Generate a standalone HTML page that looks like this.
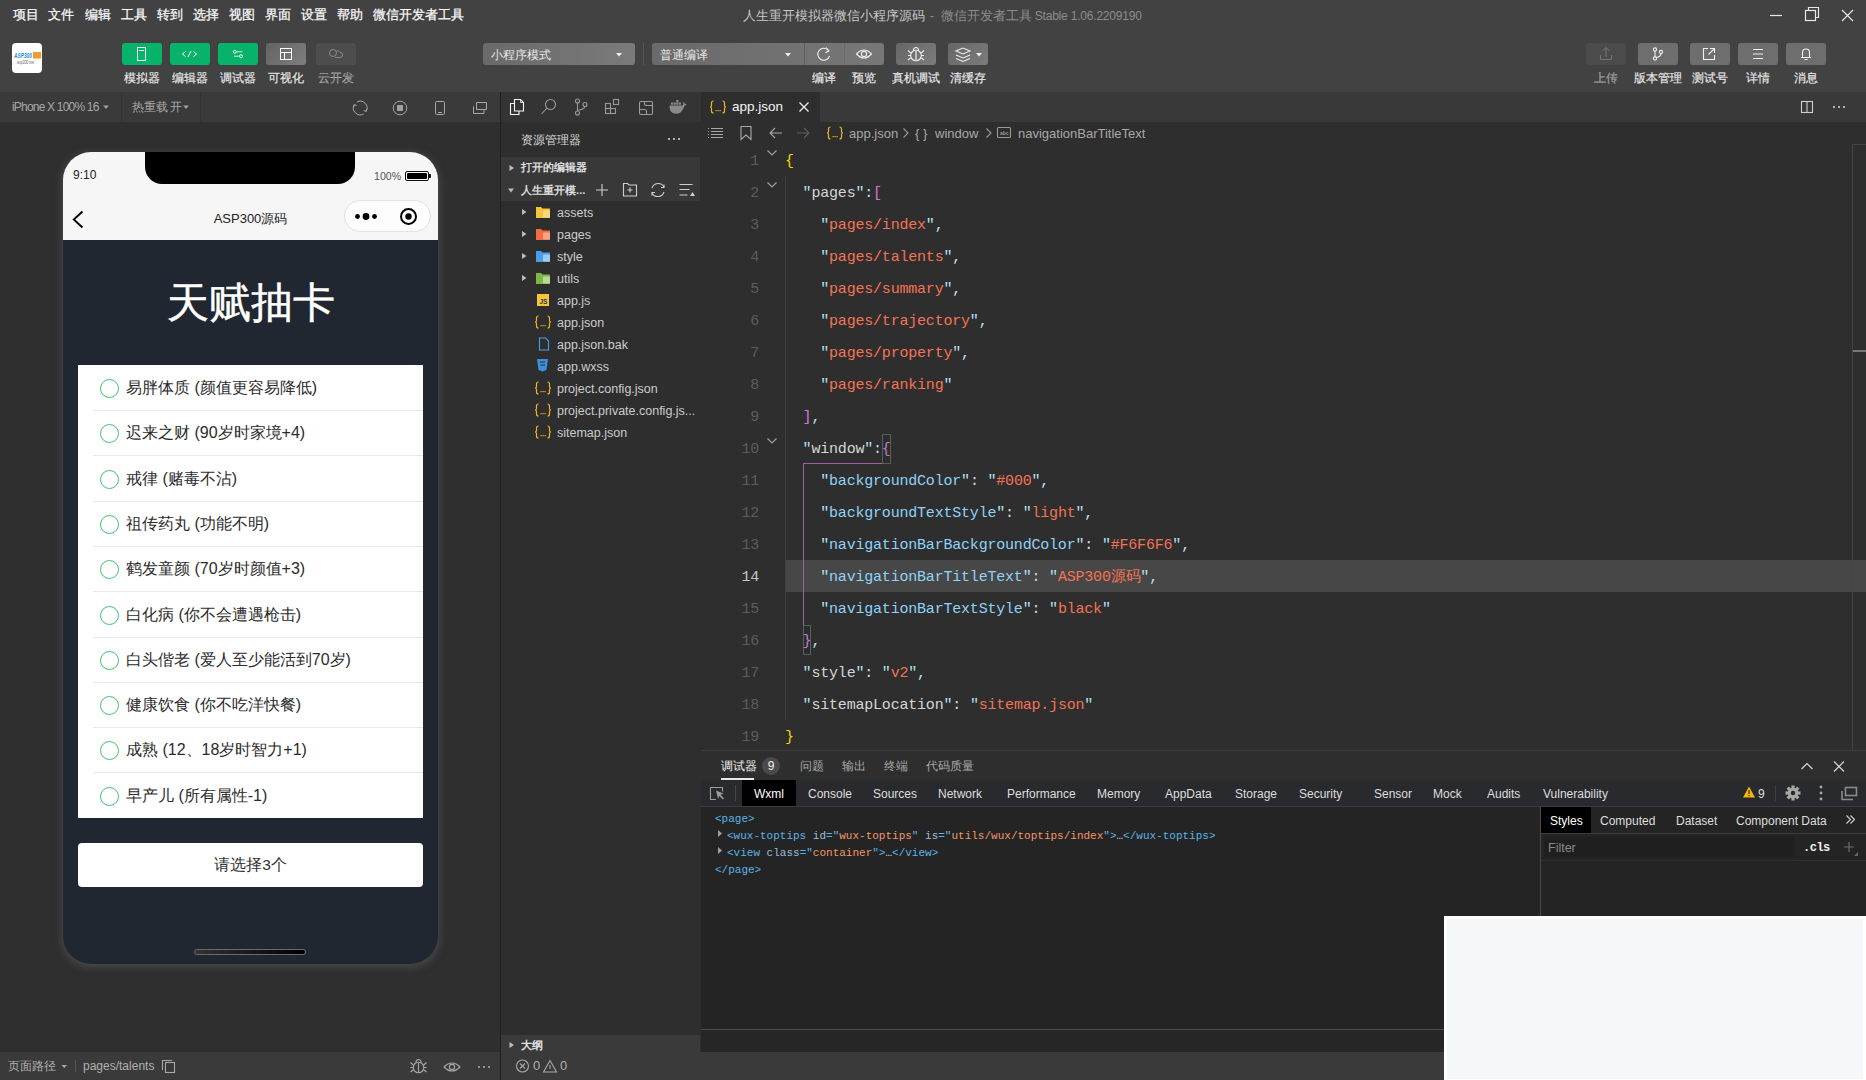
<!DOCTYPE html>
<html><head><meta charset="utf-8">
<style>
*{box-sizing:border-box;margin:0;padding:0}
html,body{width:1866px;height:1080px;overflow:hidden;background:#424242;font-family:"Liberation Sans",sans-serif;color:#ddd}
.a{position:absolute;white-space:nowrap}
.r{position:absolute}
svg{position:absolute;overflow:visible}
.menu{top:7px;font-size:13.4px;color:#fafafa;line-height:16px;-webkit-text-stroke:0.25px #fafafa}
.tbtn{position:absolute;top:43px;width:40px;height:22px;border-radius:3px;background:#07b26a}
.tlab{position:absolute;top:70px;font-size:12px;line-height:16px;color:#ececec;-webkit-text-stroke:0.2px #ddd;text-align:center;width:60px}
.gbtn{position:absolute;top:43px;height:22px;border-radius:3px;background:#6e6e6e}
</style></head><body>
<!-- ===== MENU BAR ===== -->
<div class="a menu" style="left:13px">项目</div>
<div class="a menu" style="left:48px">文件</div>
<div class="a menu" style="left:85px">编辑</div>
<div class="a menu" style="left:121px">工具</div>
<div class="a menu" style="left:157px">转到</div>
<div class="a menu" style="left:193px">选择</div>
<div class="a menu" style="left:229px">视图</div>
<div class="a menu" style="left:265px">界面</div>
<div class="a menu" style="left:301px">设置</div>
<div class="a menu" style="left:337px">帮助</div>
<div class="a menu" style="left:373px">微信开发者工具</div>
<div class="a" style="left:743px;top:8px;font-size:13px;line-height:15px;color:#c8c8c8">人生重开模拟器微信小程序源码 <span style="color:#8c8c8c;padding-left:1px">-<span style="display:inline-block;width:3px"></span> 微信开发者工具<span style="font-size:12px;letter-spacing:-0.2px"> Stable 1.06.2209190</span></span></div>


<!-- ===== TOOLBAR ===== -->
<div class="r" style="left:12px;top:43px;width:30px;height:30px;background:#fff;border-radius:4px"></div>
<svg style="left:12px;top:43px" width="30" height="30">
 <text x="2" y="15" font-size="7.5" font-family="Liberation Sans" font-weight="bold" font-style="italic" fill="#2b8fd6" textLength="18" lengthAdjust="spacingAndGlyphs">ASP300</text>
 <rect x="21" y="9" width="8" height="6.5" fill="#f39a2c"/>
 <text x="5" y="20.5" font-size="4.5" font-family="Liberation Sans" font-style="italic" fill="#666" textLength="17" lengthAdjust="spacingAndGlyphs">asp300.net</text>
</svg>
<div class="tbtn" style="left:122px"></div>
<div class="tbtn" style="left:170px"></div>
<div class="tbtn" style="left:218px"></div>
<div class="gbtn" style="left:266px;width:40px;background:linear-gradient(135deg,#636363,#7e7e7e)"></div>
<div class="gbtn" style="left:316px;width:40px;background:#4d4d4d"></div>
<svg style="left:0;top:0" width="1866" height="92">
 <g fill="none" stroke="#fff" stroke-width="1">
  <rect x="137.5" y="47.5" width="8" height="13"/><line x1="139" y1="50.5" x2="144" y2="50.5"/>
  <path d="M185.5 51.5 L182.5 54 L185.5 56.5 M188 57 L191 51 M193.5 51.5 L196.5 54 L193.5 56.5"/>
  <path d="M236.5 51.8 H242.5 M234 56.2 H239.5" stroke="#c8efd9"/>
  <circle cx="234.8" cy="51.8" r="1.5"/><circle cx="241" cy="56.2" r="1.5"/>
  <rect x="280.5" y="48.5" width="11" height="11"/><path d="M280.5 52.5 H291.5 M284.5 52.5 V59.5"/>
 </g>
 <g fill="none" stroke="#8a8a8a" stroke-width="1">
  <circle cx="333" cy="53" r="3.5"/><path d="M335 57.5 h5 a2.6 2.6 0 0 0 0 -5.2 a3 3 0 0 0 -3.5 -1.5"/>
 </g>
</svg>
<div class="tlab" style="left:112px">模拟器</div>
<div class="tlab" style="left:160px">编辑器</div>
<div class="tlab" style="left:208px">调试器</div>
<div class="tlab" style="left:256px">可视化</div>
<div class="tlab" style="left:306px;color:#7c7c7c">云开发</div>

<div class="gbtn" style="left:483px;width:152px;background:linear-gradient(90deg,#6a6a6a,#7a7a7a)"></div>
<div class="a" style="left:491px;top:48px;font-size:12.2px;line-height:15px;color:#e8e8e8">小程序模式</div>
<div class="r" style="left:643px;top:43px;width:1px;height:22px;background:#555"></div>
<div class="gbtn" style="left:652px;width:232px;background:linear-gradient(90deg,#6a6a6a,#777)"></div>
<div class="r" style="left:804px;top:43px;width:1px;height:22px;background:#606060"></div>
<div class="r" style="left:844px;top:43px;width:1px;height:22px;background:#6a6a6a"></div>
<div class="a" style="left:660px;top:48px;font-size:12.2px;line-height:15px;color:#e8e8e8">普通编译</div>
<div class="gbtn" style="left:896px;width:40px;background:linear-gradient(135deg,#666,#7c7c7c)"></div>
<div class="gbtn" style="left:948px;width:40px;background:linear-gradient(135deg,#666,#7c7c7c)"></div>
<svg style="left:0;top:0" width="1866" height="92">
 <g fill="#f0f0f0"><path d="M616 53 h6 l-3 3.5z"/><path d="M785 53 h6 l-3 3.5z"/><path d="M976 53 h6 l-3 3.5z"/></g>
 <g fill="none" stroke="#eee" stroke-width="1.1">
  <path d="M828.5 50.5 A6 6 0 1 0 829.5 56"/><path d="M826 47.5 L829 50.8 L825.5 52.8"/>
  <path d="M856.5 54 Q864 46 871.5 54 Q864 62 856.5 54Z"/><circle cx="864" cy="54" r="2.6"/>
  <circle cx="916" cy="55.5" r="5.3"/><path d="M913.3 50.8 Q913.5 47.5 916 47.5 Q918.5 47.5 918.7 50.8"/><path d="M916 50.5 V60.5" stroke-width="1.6" stroke="#d0d0d0"/><path d="M908 50.5 l2.8 2.5 M924 50.5 l-2.8 2.5 M908 55.5 h2.7 M924 55.5 h-2.7 M908 60 l2.8 -2.3 M924 60 l-2.8 -2.3"/>
  <path d="M956 51 L963 48 L970 51 L963 54 Z M956 55 L963 58 L970 55 M956 58.5 L963 61.5 L970 58.5"/>
 </g>
</svg>
<div class="tlab" style="left:794px">编译</div>
<div class="tlab" style="left:834px">预览</div>
<div class="tlab" style="left:886px">真机调试</div>
<div class="tlab" style="left:938px">清缓存</div>

<div class="gbtn" style="left:1586px;width:40px;background:#4b4b4b"></div>
<div class="gbtn" style="left:1638px;width:40px;background:#6e6e6e"></div>
<div class="gbtn" style="left:1690px;width:40px;background:#6e6e6e"></div>
<div class="gbtn" style="left:1738px;width:40px;background:#6e6e6e"></div>
<div class="gbtn" style="left:1786px;width:40px;background:#6e6e6e"></div>
<svg style="left:0;top:0" width="1866" height="92">
 <g fill="none" stroke="#777" stroke-width="1"><path d="M1600.5 55 v4.5 h11 v-4.5 M1606 57 V48 M1602.5 51 L1606 47.5 L1609.5 51"/></g>
 <g fill="none" stroke="#f0f0f0" stroke-width="1.1">
  <circle cx="1655" cy="49.5" r="1.6"/><circle cx="1655" cy="58.5" r="1.6"/><circle cx="1661" cy="52" r="1.6"/><path d="M1655 51 V57 M1661 53.6 Q1661 57 1656 57.5"/>
  <path d="M1708 48.5 h-4.5 v11 h11 v-4.5 M1710 48.5 h4.5 v4.5 M1714.5 48.5 L1708.5 54.5"/>
  <path d="M1753 49.5 h10 M1753 54 h10 M1753 58.5 h10"/>
  <path d="M1801 57.5 h10 M1802.5 57.5 V52.5 a3.5 3.5 0 0 1 7 0 V57.5 M1804.5 59.5 h3"/>
 </g>
 <g fill="none" stroke="#e8e8e8" stroke-width="1.2">
  <path d="M1770 15.5 h12"/><rect x="1805.5" y="10.5" width="10" height="10"/><path d="M1808.5 10.5 V7.5 H1818.5 V17.5 H1815.5"/>
  <path d="M1842 10 L1853 21 M1853 10 L1842 21"/>
 </g>
</svg>
<div class="tlab" style="left:1576px;color:#7a7a7a">上传</div>
<div class="tlab" style="left:1628px">版本管理</div>
<div class="tlab" style="left:1680px">测试号</div>
<div class="tlab" style="left:1728px">详情</div>
<div class="tlab" style="left:1776px">消息</div>

<!-- SIM -->
<div class="r" id="sim" style="left:0;top:92px;width:500px;height:960px;background:#2f2f2f"></div>
<div class="r" style="left:0;top:92px;width:500px;height:30px;background:#3a3a3a"></div>

<!-- EXPLORER -->
<div class="r" style="left:501px;top:92px;width:200px;height:960px;background:#2e2e2e"></div>
<div class="r" style="left:501px;top:92px;width:200px;height:30px;background:#343434"></div>
<!-- EDITOR -->
<div class="r" style="left:701px;top:92px;width:1165px;height:30px;background:#393939"></div>
<div class="r" style="left:701px;top:92px;width:119px;height:30px;background:#2e2e2e"></div>
<div class="r" style="left:701px;top:122px;width:1165px;height:628px;background:#2e2e2e"></div>
<!-- DEVTOOLS -->
<div class="r" style="left:701px;top:750px;width:1165px;height:1px;background:#3c3c3c"></div>
<div class="r" style="left:701px;top:751px;width:1165px;height:29px;background:#2e2e2e"></div>
<div class="r" style="left:701px;top:780px;width:1165px;height:26px;background:#292a2d"></div>
<div class="r" style="left:701px;top:806px;width:1165px;height:1px;background:#3c3c3c"></div>
<div class="r" style="left:701px;top:807px;width:1165px;height:245px;background:#242424"></div>

<!-- SIM TOOLBAR -->
<div class="a" style="left:12px;top:100px;font-size:12px;line-height:14px;color:#a8a8a8;letter-spacing:-0.8px">iPhone X 100% 16</div>
<div class="r" style="left:121px;top:92px;width:1px;height:30px;background:#333"></div>
<div class="a" style="left:132px;top:100px;font-size:11.6px;line-height:14px;color:#a8a8a8;letter-spacing:-0.2px">热重载 开</div>
<div class="r" style="left:200px;top:92px;width:1px;height:30px;background:#333"></div>
<svg style="left:0;top:0" width="500" height="122">
 <g fill="#a0a0a0"><path d="M103 105.5 h6 l-3 3.5z"/><path d="M183 105.5 h6 l-3 3.5z"/></g>
 <g fill="none" stroke="#a8a8a8" stroke-width="1">
  <path d="M356.8 102.1 A6.8 6.8 0 0 1 366.1 111.4"/><path d="M363.6 113.9 A6.8 6.8 0 0 1 354.3 104.6"/>
  <path d="M363.8 110.5 l2.3 1 l0.6 -2.5"/><path d="M356.6 105.5 l-2.3 -1 l-0.6 2.5"/>
  <circle cx="400" cy="108" r="6.8"/>
  <rect x="435.5" y="101.5" width="9" height="13" rx="1"/><path d="M438 112.5 h4"/>
  <path d="M476.5 102.5 h10 v7 h-10z M473.5 106.5 v7 h10.5 v-3.5"/>
 </g>
 <rect x="397" y="105" width="6" height="6" fill="#a0a0a0"/>
</svg>
<!-- PHONE -->
<div class="r" style="left:63px;top:152px;width:375px;height:812px;border-radius:28px;background:#212730;box-shadow:0 2px 8px 1px rgba(78,78,78,.9);overflow:hidden">
 <div class="r" style="left:0;top:0;width:375px;height:88px;background:#f6f6f6"></div>
 <div class="r" style="left:82px;top:0;width:210px;height:32px;background:#000;border-radius:0 0 17px 17px"></div>
 <div class="a" style="left:10px;top:16px;font-size:12px;line-height:14px;color:#222">9:10</div>
 <div class="a" style="left:311px;top:17px;font-size:10.6px;line-height:14px;color:#555">100%</div>
 <div class="r" style="left:342px;top:19px;width:24px;height:10px;border:1px solid #111;border-radius:2px;padding:1px"><div style="width:100%;height:100%;background:#000;border-radius:1px"></div></div>
 <div class="r" style="left:366px;top:22px;width:2px;height:4px;background:#111;border-radius:0 1px 1px 0"></div>
 <svg style="left:0;top:0" width="375" height="88">
  <path d="M19.5 59.5 L10.8 67.5 L19.5 75.5" fill="none" stroke="#000" stroke-width="1.9"/>
 </svg>
 <div class="a" style="left:0;top:59px;width:375px;text-align:center;font-size:13px;line-height:16px;color:#222">ASP300源码</div>
 <div class="r" style="left:281px;top:48px;width:87px;height:32px;border-radius:16px;background:#fdfdfd;border:1px solid #e2e2e2"></div>
 
 <svg style="left:0;top:0" width="375" height="88">
  <circle cx="294.5" cy="64.5" r="2.4"/><circle cx="303" cy="64.5" r="3.4"/><circle cx="311.5" cy="64.5" r="2.4"/>
  <circle cx="345.5" cy="64.5" r="7.5" fill="none" stroke="#000" stroke-width="2"/><circle cx="345.5" cy="64.5" r="3.2"/>
 </svg>
 <div class="a" style="left:0;top:125.5px;width:375px;text-align:center;font-size:41.5px;line-height:50px;color:#fff;-webkit-text-stroke:0.5px #fff">天赋抽卡</div>
 <div class="r" style="left:15px;top:213px;width:345px;height:453px;background:#fff"></div>
 <div class="r" style="left:15px;top:691px;width:345px;height:44px;background:#fff;border-radius:4px"></div>
 <div class="a" style="left:15px;top:703px;width:345px;text-align:center;font-size:15.5px;line-height:20px;color:#333">请选择3个</div>
 <div class="r" style="left:131px;top:797px;width:112px;height:6px;border-radius:3px;background:linear-gradient(90deg,#333,#000);border:1px solid #6a6a6a"></div>
</div>
<div class="r" style="left:100px;top:379.0px;width:19px;height:19px;border:1px solid #3fc46e;border-radius:50%"></div>
<div class="a" style="left:126px;top:378.0px;font-size:16px;line-height:20px;color:#2b2b2b">易胖体质 (颜值更容易降低)</div>
<div class="r" style="left:93px;top:410.0px;width:330px;height:1px;background:#e8e8e8"></div>
<div class="r" style="left:100px;top:424.3px;width:19px;height:19px;border:1px solid #3fc46e;border-radius:50%"></div>
<div class="a" style="left:126px;top:423.3px;font-size:16px;line-height:20px;color:#2b2b2b">迟来之财 (90岁时家境+4)</div>
<div class="r" style="left:93px;top:455.3px;width:330px;height:1px;background:#e8e8e8"></div>
<div class="r" style="left:100px;top:469.6px;width:19px;height:19px;border:1px solid #3fc46e;border-radius:50%"></div>
<div class="a" style="left:126px;top:468.6px;font-size:16px;line-height:20px;color:#2b2b2b">戒律 (赌毒不沾)</div>
<div class="r" style="left:93px;top:500.6px;width:330px;height:1px;background:#e8e8e8"></div>
<div class="r" style="left:100px;top:514.9px;width:19px;height:19px;border:1px solid #3fc46e;border-radius:50%"></div>
<div class="a" style="left:126px;top:513.9px;font-size:16px;line-height:20px;color:#2b2b2b">祖传药丸 (功能不明)</div>
<div class="r" style="left:93px;top:545.9px;width:330px;height:1px;background:#e8e8e8"></div>
<div class="r" style="left:100px;top:560.2px;width:19px;height:19px;border:1px solid #3fc46e;border-radius:50%"></div>
<div class="a" style="left:126px;top:559.2px;font-size:16px;line-height:20px;color:#2b2b2b">鹤发童颜 (70岁时颜值+3)</div>
<div class="r" style="left:93px;top:591.2px;width:330px;height:1px;background:#e8e8e8"></div>
<div class="r" style="left:100px;top:605.5px;width:19px;height:19px;border:1px solid #3fc46e;border-radius:50%"></div>
<div class="a" style="left:126px;top:604.5px;font-size:16px;line-height:20px;color:#2b2b2b">白化病 (你不会遭遇枪击)</div>
<div class="r" style="left:93px;top:636.5px;width:330px;height:1px;background:#e8e8e8"></div>
<div class="r" style="left:100px;top:650.8px;width:19px;height:19px;border:1px solid #3fc46e;border-radius:50%"></div>
<div class="a" style="left:126px;top:649.8px;font-size:16px;line-height:20px;color:#2b2b2b">白头偕老 (爱人至少能活到70岁)</div>
<div class="r" style="left:93px;top:681.8px;width:330px;height:1px;background:#e8e8e8"></div>
<div class="r" style="left:100px;top:696.1px;width:19px;height:19px;border:1px solid #3fc46e;border-radius:50%"></div>
<div class="a" style="left:126px;top:695.1px;font-size:16px;line-height:20px;color:#2b2b2b">健康饮食 (你不吃洋快餐)</div>
<div class="r" style="left:93px;top:727.1px;width:330px;height:1px;background:#e8e8e8"></div>
<div class="r" style="left:100px;top:741.4px;width:19px;height:19px;border:1px solid #3fc46e;border-radius:50%"></div>
<div class="a" style="left:126px;top:740.4px;font-size:16px;line-height:20px;color:#2b2b2b">成熟 (12、18岁时智力+1)</div>
<div class="r" style="left:93px;top:772.4px;width:330px;height:1px;background:#e8e8e8"></div>
<div class="r" style="left:100px;top:786.7px;width:19px;height:19px;border:1px solid #3fc46e;border-radius:50%"></div>
<div class="a" style="left:126px;top:785.7px;font-size:16px;line-height:20px;color:#2b2b2b">早产儿 (所有属性-1)</div>


<!-- EXPLORER CONTENT -->
<svg style="left:0;top:0" width="701" height="450">
 <g fill="none" stroke="#f4f4f4" stroke-width="1.1">
  <path d="M514.5 99.5 h6 l3 3 v8.5 h-9z"/><path d="M514.5 103.5 h-4 v11 h8.5 v-3.5"/><path d="M520.5 99.5 v3 h3" stroke-width="0.8"/>
 </g>
 <g fill="none" stroke="#9a9a9a" stroke-width="1.1">
  <circle cx="550.5" cy="104.5" r="5"/><path d="M547 108 L541.5 114"/>
  <circle cx="577.5" cy="101" r="2"/><circle cx="577.5" cy="113" r="2"/><circle cx="585" cy="104.5" r="2"/><path d="M577.5 103 V111 M585 106.5 Q585 109 578.5 110"/>
  <rect x="605.5" y="103.5" width="5" height="5"/><rect x="605.5" y="108.5" width="5" height="5"/><rect x="610.5" y="108.5" width="5" height="5"/><rect x="613.5" y="99.5" width="5" height="5"/>
  <rect x="639.5" y="101.5" width="13" height="13" rx="1.5"/><path d="M644.5 101.5 v2 q0 2 2 2 h6 M639.5 109.5 h5 q2 0 2 2 v3"/>
 </g>
 <path fill="#8a8a8a" d="M669.5 105.5 h13 l1 -1.5 l-0.8 -2 l1.5 0.5 l0.8 1.5 h1.5 q-0.5 1.5 -2 1.8 q-2.5 8 -8 8 q-7 0 -7 -7.5z"/><g fill="#8a8a8a"><rect x="671" y="102.5" width="2.2" height="2.2"/><rect x="673.6" y="102.5" width="2.2" height="2.2"/><rect x="676.2" y="102.5" width="2.2" height="2.2"/><rect x="676.2" y="100" width="2.2" height="2.2"/><rect x="678.8" y="102.5" width="2.2" height="2.2"/></g>
 <g fill="#d0d0d0"><circle cx="669" cy="139" r="1.1"/><circle cx="674" cy="139" r="1.1"/><circle cx="679" cy="139" r="1.1"/></g>
</svg>
<div class="a" style="left:521px;top:132px;font-size:11.5px;line-height:16px;color:#d8d8d8">资源管理器</div>
<div class="r" style="left:501px;top:157px;width:199px;height:44px;background:#383838"></div>
<div class="a" style="left:521px;top:159px;font-size:11.3px;line-height:16px;color:#dcdcdc;font-weight:bold">打开的编辑器</div>
<div class="a" style="left:521px;top:182px;font-size:11.3px;line-height:16px;color:#dcdcdc;font-weight:bold">人生重开模...</div>
<svg style="left:0;top:0" width="701" height="450">
 <g fill="#bbb"><path d="M509.5 165 l4.5 3 l-4.5 3z"/><path d="M508 188.5 h6 l-3 4z"/>
  <path d="M522 209 l4.5 3 l-4.5 3z"/><path d="M522 231 l4.5 3 l-4.5 3z"/><path d="M522 253 l4.5 3 l-4.5 3z"/><path d="M522 275 l4.5 3 l-4.5 3z"/>
 </g>
 <g fill="none" stroke="#cfcfcf" stroke-width="1.1">
  <path d="M602 184 V196 M596 190 H608"/>
  <path d="M623.5 183.5 h4 l1.5 1.5 h7.5 v11 h-13z M630 187.5 v5 M627.5 190 h5"/>
  <path d="M652 188 A6.5 6.5 0 0 1 664 187"/><path d="M664 192 A6.5 6.5 0 0 1 652 193"/><path d="M664 184.5 v3 h-3 M652 195.5 v-3 h3"/>
  <path d="M679.5 184.5 h13 M679.5 189.5 h10 M679.5 195 h8"/>
 </g>
 <path d="M690 196 l2.5 -4 l2.5 4z" fill="#cfcfcf"/>
 <!-- folders -->
 <path d="M536 207 h5 l1.5 1.5 h7.5 v9.5 h-14z" fill="#f5c43a"/><rect x="543" y="210.5" width="7" height="7" fill="#f7d880" rx="1"/>
 <path d="M536 229 h5 l1.5 1.5 h7.5 v9.5 h-14z" fill="#f26b43"/><rect x="543" y="232.5" width="7" height="7" fill="#f7a58a" rx="1"/>
 <path d="M536 251 h5 l1.5 1.5 h7.5 v9.5 h-14z" fill="#4a9ee8"/><rect x="543" y="254.5" width="7" height="7" fill="#9ccbf3" rx="1"/>
 <path d="M536 273 h5 l1.5 1.5 h7.5 v9.5 h-14z" fill="#7fb648"/><rect x="543" y="276.5" width="7" height="7" fill="#b8da93" rx="1"/>
 <rect x="537" y="294" width="12" height="12" fill="#f5c43a"/>
 <text x="539.5" y="304" font-size="6.5" font-family="Liberation Sans" font-weight="bold" fill="#333">JS</text>
 <path d="M539.5 338 h6 l3 3 v9 h-9z" fill="none" stroke="#4a9ee8" stroke-width="1.1"/>
 <path d="M537 359 h11 l-1.5 11 l-4 1.5 l-4 -1.5 z" fill="#3d8fdc"/><path d="M540 362 h5 M540.5 365 h4.5" stroke="#2e2e2e" stroke-width="1"/>
</svg>
<div class="a" style="left:557px;top:205px;font-size:12.5px;line-height:16px;color:#cccccc;letter-spacing:0px">assets</div>
<div class="a" style="left:557px;top:227px;font-size:12.5px;line-height:16px;color:#cccccc;letter-spacing:0px">pages</div>
<div class="a" style="left:557px;top:249px;font-size:12.5px;line-height:16px;color:#cccccc;letter-spacing:0px">style</div>
<div class="a" style="left:557px;top:271px;font-size:12.5px;line-height:16px;color:#cccccc;letter-spacing:0px">utils</div>
<div class="a" style="left:557px;top:293px;font-size:12.5px;line-height:16px;color:#cccccc;letter-spacing:0px">app.js</div>
<div class="a" style="left:557px;top:315px;font-size:12.5px;line-height:16px;color:#cccccc;letter-spacing:0px">app.json</div>
<div class="a" style="left:557px;top:337px;font-size:12.5px;line-height:16px;color:#cccccc;letter-spacing:0px">app.json.bak</div>
<div class="a" style="left:557px;top:359px;font-size:12.5px;line-height:16px;color:#cccccc;letter-spacing:0px">app.wxss</div>
<div class="a" style="left:557px;top:381px;font-size:12.5px;line-height:16px;color:#cccccc;letter-spacing:0px">project.config.json</div>
<div class="a" style="left:557px;top:403px;font-size:12.5px;line-height:16px;color:#cccccc;letter-spacing:0px">project.private.config.js...</div>
<div class="a" style="left:557px;top:425px;font-size:12.5px;line-height:16px;color:#cccccc;letter-spacing:0px">sitemap.json</div>

<div class="r" style="left:501px;top:1035px;width:199px;height:17px;background:#3a3a3a"></div>
<svg style="left:0;top:0" width="701" height="1080"><path d="M509.5 1042 l4.5 3 l-4.5 3z" fill="#bbb"/></svg>
<div class="a" style="left:521px;top:1038px;font-size:11.3px;line-height:14px;color:#e0e0e0;font-weight:bold">大纲</div>

<svg style="left:0;top:0" width="1866" height="450"><g fill="none" stroke="#f0b429" stroke-width="1.2"><path d="M538.5 316 q-2 0 -2 2 v2.5 q0 1.5 -1.5 1.5 q1.5 0 1.5 1.5 v2.5 q0 2 2 2"/><path d="M547.5 316 q2 0 2 2 v2.5 q0 1.5 1.5 1.5 q-1.5 0 -1.5 1.5 v2.5 q0 2 -2 2"/></g><g fill="#f0b429"><rect x="540.5" y="325" width="1.2" height="1.2"/><rect x="542.5" y="325" width="1.2" height="1.2"/><rect x="544.5" y="325" width="1.2" height="1.2"/></g><g fill="none" stroke="#f0b429" stroke-width="1.2"><path d="M538.5 382 q-2 0 -2 2 v2.5 q0 1.5 -1.5 1.5 q1.5 0 1.5 1.5 v2.5 q0 2 2 2"/><path d="M547.5 382 q2 0 2 2 v2.5 q0 1.5 1.5 1.5 q-1.5 0 -1.5 1.5 v2.5 q0 2 -2 2"/></g><g fill="#f0b429"><rect x="540.5" y="391" width="1.2" height="1.2"/><rect x="542.5" y="391" width="1.2" height="1.2"/><rect x="544.5" y="391" width="1.2" height="1.2"/></g><g fill="none" stroke="#f0b429" stroke-width="1.2"><path d="M538.5 404 q-2 0 -2 2 v2.5 q0 1.5 -1.5 1.5 q1.5 0 1.5 1.5 v2.5 q0 2 2 2"/><path d="M547.5 404 q2 0 2 2 v2.5 q0 1.5 1.5 1.5 q-1.5 0 -1.5 1.5 v2.5 q0 2 -2 2"/></g><g fill="#f0b429"><rect x="540.5" y="413" width="1.2" height="1.2"/><rect x="542.5" y="413" width="1.2" height="1.2"/><rect x="544.5" y="413" width="1.2" height="1.2"/></g><g fill="none" stroke="#f0b429" stroke-width="1.2"><path d="M538.5 426 q-2 0 -2 2 v2.5 q0 1.5 -1.5 1.5 q1.5 0 1.5 1.5 v2.5 q0 2 2 2"/><path d="M547.5 426 q2 0 2 2 v2.5 q0 1.5 1.5 1.5 q-1.5 0 -1.5 1.5 v2.5 q0 2 -2 2"/></g><g fill="#f0b429"><rect x="540.5" y="435" width="1.2" height="1.2"/><rect x="542.5" y="435" width="1.2" height="1.2"/><rect x="544.5" y="435" width="1.2" height="1.2"/></g><g fill="none" stroke="#f0b429" stroke-width="1.2"><path d="M713.5 101 q-2 0 -2 2 v2.5 q0 1.5 -1.5 1.5 q1.5 0 1.5 1.5 v2.5 q0 2 2 2"/><path d="M722.5 101 q2 0 2 2 v2.5 q0 1.5 1.5 1.5 q-1.5 0 -1.5 1.5 v2.5 q0 2 -2 2"/></g><g fill="#f0b429"><rect x="715.5" y="110" width="1.2" height="1.2"/><rect x="717.5" y="110" width="1.2" height="1.2"/><rect x="719.5" y="110" width="1.2" height="1.2"/></g><g fill="none" stroke="#f0b429" stroke-width="1.2"><path d="M830.5 127 q-2 0 -2 2 v2.5 q0 1.5 -1.5 1.5 q1.5 0 1.5 1.5 v2.5 q0 2 2 2"/><path d="M839.5 127 q2 0 2 2 v2.5 q0 1.5 1.5 1.5 q-1.5 0 -1.5 1.5 v2.5 q0 2 -2 2"/></g><g fill="#f0b429"><rect x="832.5" y="136" width="1.2" height="1.2"/><rect x="834.5" y="136" width="1.2" height="1.2"/><rect x="836.5" y="136" width="1.2" height="1.2"/></g></svg>

<!-- EDITOR CONTENT -->
<div class="a" style="left:732px;top:99px;font-size:13.5px;line-height:16px;color:#f4f4f4">app.json</div>
<svg style="left:0;top:0" width="1866" height="760">
 <g fill="none" stroke="#eee" stroke-width="1.3"><path d="M799.5 102.5 L808.5 111.5 M808.5 102.5 L799.5 111.5"/></g>
 <g fill="none" stroke="#cfcfcf" stroke-width="1.1"><rect x="1801.5" y="101.5" width="11" height="11"/><path d="M1807 101.5 V112.5"/></g>
 <g fill="#cfcfcf"><circle cx="1834" cy="107" r="1.1"/><circle cx="1839" cy="107" r="1.1"/><circle cx="1844" cy="107" r="1.1"/></g>
 <g fill="none" stroke="#a8a8a8" stroke-width="1.1">
  <path d="M711 128.5 h12 M711 131.5 h12 M711 134.5 h12 M711 137.5 h12" /><path d="M708 128.5 h1 M708 131.5 h1 M708 134.5 h1 M708 137.5 h1"/>
  <path d="M741 126.5 h10 v13 l-5 -4.5 l-5 4.5z"/>
  <path d="M770 133 h12 M775 128 L770 133 L775 138"/>
 </g>
 <g fill="none" stroke="#5f5f5f" stroke-width="1.1"><path d="M797 133 h12 M804 128 L809 133 L804 138"/></g>
 <g fill="none" stroke="#9a9a9a" stroke-width="1.1">
  <path d="M903.5 128.5 L908 133 L903.5 137.5"/><path d="M986.5 128.5 L991 133 L986.5 137.5"/>
  <rect x="997.5" y="127.5" width="13" height="10" rx="1"/>
 </g>
 <text x="1000" y="134.5" font-size="5" font-family="Liberation Sans" font-weight="bold" fill="#9a9a9a">abc</text>
 <g fill="none" stroke="#a0a0a0" stroke-width="1.2">
  <path d="M767.5 150.5 L772 155 L776.5 150.5"/><path d="M767.5 182.5 L772 187 L776.5 182.5"/><path d="M767.5 438.5 L772 443 L776.5 438.5"/>
 </g>
</svg>
<div class="a" style="left:849px;top:126px;font-size:13px;line-height:16px;color:#a8a8a8">app.json</div>
<div class="a" style="left:915px;top:126px;font-size:13px;line-height:16px;color:#a8a8a8">{ }</div>
<div class="a" style="left:935px;top:126px;font-size:13px;line-height:16px;color:#a8a8a8">window</div>
<div class="a" style="left:1018px;top:126px;font-size:13px;line-height:16px;color:#a8a8a8">navigationBarTitleText</div>
<!-- current line -->
<div class="r" style="left:786px;top:560px;width:1080px;height:32px;background:#474747"></div>
<!-- indent guides -->
<div class="r" style="left:785px;top:176px;width:1px;height:544px;background:#404040"></div>
<div class="r" style="left:803px;top:463px;width:79px;height:1px;background:#a35fa3"></div>
<div class="r" style="left:803px;top:463px;width:1px;height:185px;background:#a35fa3"></div>
<!-- bracket match boxes -->
<div class="r" style="left:882px;top:434px;width:9px;height:30px;border:1px solid #5d5d5d;background:#26302a"></div>
<div class="r" style="left:803px;top:625px;width:8px;height:30px;border:1px solid #5d5d5d;background:#26302a"></div>
<!-- scrollbar/minimap -->
<div class="r" style="left:1852px;top:144px;width:1px;height:606px;background:#444"></div><div class="r" style="left:1852px;top:144px;width:14px;height:1px;background:#444"></div>
<div class="r" style="left:1853px;top:350px;width:13px;height:2px;background:#777"></div>
<div class="a" style="left:700px;width:59px;text-align:right;top:153px;font-size:15px;line-height:18px;font-family:'Liberation Mono';letter-spacing:-0.2px;color:#5c5c5c">1</div>
<div class="a" style="left:785px;top:153px;font-size:15px;line-height:18px;font-family:'Liberation Mono';letter-spacing:-0.2px;white-space:pre"><span style="color:#ffd700">{</span></div>
<div class="a" style="left:700px;width:59px;text-align:right;top:185px;font-size:15px;line-height:18px;font-family:'Liberation Mono';letter-spacing:-0.2px;color:#5c5c5c">2</div>
<div class="a" style="left:785px;top:185px;font-size:15px;line-height:18px;font-family:'Liberation Mono';letter-spacing:-0.2px;white-space:pre"><span style="color:#d6d6d6">  </span><span style="color:#b8e0f5">"</span><span style="color:#d6d6d6">pages</span><span style="color:#b8e0f5">"</span><span style="color:#b8e0f5">:</span><span style="color:#da70d6">[</span></div>
<div class="a" style="left:700px;width:59px;text-align:right;top:217px;font-size:15px;line-height:18px;font-family:'Liberation Mono';letter-spacing:-0.2px;color:#5c5c5c">3</div>
<div class="a" style="left:785px;top:217px;font-size:15px;line-height:18px;font-family:'Liberation Mono';letter-spacing:-0.2px;white-space:pre"><span style="color:#d6d6d6">    </span><span style="color:#b8e0f5">"</span><span style="color:#f47355">pages/index</span><span style="color:#b8e0f5">"</span><span style="color:#b8e0f5">,</span></div>
<div class="a" style="left:700px;width:59px;text-align:right;top:249px;font-size:15px;line-height:18px;font-family:'Liberation Mono';letter-spacing:-0.2px;color:#5c5c5c">4</div>
<div class="a" style="left:785px;top:249px;font-size:15px;line-height:18px;font-family:'Liberation Mono';letter-spacing:-0.2px;white-space:pre"><span style="color:#d6d6d6">    </span><span style="color:#b8e0f5">"</span><span style="color:#f47355">pages/talents</span><span style="color:#b8e0f5">"</span><span style="color:#b8e0f5">,</span></div>
<div class="a" style="left:700px;width:59px;text-align:right;top:281px;font-size:15px;line-height:18px;font-family:'Liberation Mono';letter-spacing:-0.2px;color:#5c5c5c">5</div>
<div class="a" style="left:785px;top:281px;font-size:15px;line-height:18px;font-family:'Liberation Mono';letter-spacing:-0.2px;white-space:pre"><span style="color:#d6d6d6">    </span><span style="color:#b8e0f5">"</span><span style="color:#f47355">pages/summary</span><span style="color:#b8e0f5">"</span><span style="color:#b8e0f5">,</span></div>
<div class="a" style="left:700px;width:59px;text-align:right;top:313px;font-size:15px;line-height:18px;font-family:'Liberation Mono';letter-spacing:-0.2px;color:#5c5c5c">6</div>
<div class="a" style="left:785px;top:313px;font-size:15px;line-height:18px;font-family:'Liberation Mono';letter-spacing:-0.2px;white-space:pre"><span style="color:#d6d6d6">    </span><span style="color:#b8e0f5">"</span><span style="color:#f47355">pages/trajectory</span><span style="color:#b8e0f5">"</span><span style="color:#b8e0f5">,</span></div>
<div class="a" style="left:700px;width:59px;text-align:right;top:345px;font-size:15px;line-height:18px;font-family:'Liberation Mono';letter-spacing:-0.2px;color:#5c5c5c">7</div>
<div class="a" style="left:785px;top:345px;font-size:15px;line-height:18px;font-family:'Liberation Mono';letter-spacing:-0.2px;white-space:pre"><span style="color:#d6d6d6">    </span><span style="color:#b8e0f5">"</span><span style="color:#f47355">pages/property</span><span style="color:#b8e0f5">"</span><span style="color:#b8e0f5">,</span></div>
<div class="a" style="left:700px;width:59px;text-align:right;top:377px;font-size:15px;line-height:18px;font-family:'Liberation Mono';letter-spacing:-0.2px;color:#5c5c5c">8</div>
<div class="a" style="left:785px;top:377px;font-size:15px;line-height:18px;font-family:'Liberation Mono';letter-spacing:-0.2px;white-space:pre"><span style="color:#d6d6d6">    </span><span style="color:#b8e0f5">"</span><span style="color:#f47355">pages/ranking</span><span style="color:#b8e0f5">"</span></div>
<div class="a" style="left:700px;width:59px;text-align:right;top:409px;font-size:15px;line-height:18px;font-family:'Liberation Mono';letter-spacing:-0.2px;color:#5c5c5c">9</div>
<div class="a" style="left:785px;top:409px;font-size:15px;line-height:18px;font-family:'Liberation Mono';letter-spacing:-0.2px;white-space:pre"><span style="color:#d6d6d6">  </span><span style="color:#da70d6">]</span><span style="color:#b8e0f5">,</span></div>
<div class="a" style="left:700px;width:59px;text-align:right;top:441px;font-size:15px;line-height:18px;font-family:'Liberation Mono';letter-spacing:-0.2px;color:#5c5c5c">10</div>
<div class="a" style="left:785px;top:441px;font-size:15px;line-height:18px;font-family:'Liberation Mono';letter-spacing:-0.2px;white-space:pre"><span style="color:#d6d6d6">  </span><span style="color:#b8e0f5">"</span><span style="color:#d6d6d6">window</span><span style="color:#b8e0f5">"</span><span style="color:#b8e0f5">:</span><span style="color:#da70d6">{</span></div>
<div class="a" style="left:700px;width:59px;text-align:right;top:473px;font-size:15px;line-height:18px;font-family:'Liberation Mono';letter-spacing:-0.2px;color:#5c5c5c">11</div>
<div class="a" style="left:785px;top:473px;font-size:15px;line-height:18px;font-family:'Liberation Mono';letter-spacing:-0.2px;white-space:pre"><span style="color:#d6d6d6">    </span><span style="color:#b8e0f5">"</span><span style="color:#8fd3f7">backgroundColor</span><span style="color:#b8e0f5">"</span><span style="color:#b8e0f5">: </span><span style="color:#b8e0f5">"</span><span style="color:#f47355">#000</span><span style="color:#b8e0f5">"</span><span style="color:#b8e0f5">,</span></div>
<div class="a" style="left:700px;width:59px;text-align:right;top:505px;font-size:15px;line-height:18px;font-family:'Liberation Mono';letter-spacing:-0.2px;color:#5c5c5c">12</div>
<div class="a" style="left:785px;top:505px;font-size:15px;line-height:18px;font-family:'Liberation Mono';letter-spacing:-0.2px;white-space:pre"><span style="color:#d6d6d6">    </span><span style="color:#b8e0f5">"</span><span style="color:#8fd3f7">backgroundTextStyle</span><span style="color:#b8e0f5">"</span><span style="color:#b8e0f5">: </span><span style="color:#b8e0f5">"</span><span style="color:#f47355">light</span><span style="color:#b8e0f5">"</span><span style="color:#b8e0f5">,</span></div>
<div class="a" style="left:700px;width:59px;text-align:right;top:537px;font-size:15px;line-height:18px;font-family:'Liberation Mono';letter-spacing:-0.2px;color:#5c5c5c">13</div>
<div class="a" style="left:785px;top:537px;font-size:15px;line-height:18px;font-family:'Liberation Mono';letter-spacing:-0.2px;white-space:pre"><span style="color:#d6d6d6">    </span><span style="color:#b8e0f5">"</span><span style="color:#8fd3f7">navigationBarBackgroundColor</span><span style="color:#b8e0f5">"</span><span style="color:#b8e0f5">: </span><span style="color:#b8e0f5">"</span><span style="color:#f47355">#F6F6F6</span><span style="color:#b8e0f5">"</span><span style="color:#b8e0f5">,</span></div>
<div class="a" style="left:700px;width:59px;text-align:right;top:569px;font-size:15px;line-height:18px;font-family:'Liberation Mono';letter-spacing:-0.2px;color:#c6c6c6">14</div>
<div class="a" style="left:785px;top:569px;font-size:15px;line-height:18px;font-family:'Liberation Mono';letter-spacing:-0.2px;white-space:pre"><span style="color:#d6d6d6">    </span><span style="color:#b8e0f5">"</span><span style="color:#8fd3f7">navigationBarTitleText</span><span style="color:#b8e0f5">"</span><span style="color:#b8e0f5">: </span><span style="color:#b8e0f5">"</span><span style="color:#f47355">ASP300源码</span><span style="color:#b8e0f5">"</span><span style="color:#b8e0f5">,</span></div>
<div class="a" style="left:700px;width:59px;text-align:right;top:601px;font-size:15px;line-height:18px;font-family:'Liberation Mono';letter-spacing:-0.2px;color:#5c5c5c">15</div>
<div class="a" style="left:785px;top:601px;font-size:15px;line-height:18px;font-family:'Liberation Mono';letter-spacing:-0.2px;white-space:pre"><span style="color:#d6d6d6">    </span><span style="color:#b8e0f5">"</span><span style="color:#8fd3f7">navigationBarTextStyle</span><span style="color:#b8e0f5">"</span><span style="color:#b8e0f5">: </span><span style="color:#b8e0f5">"</span><span style="color:#f47355">black</span><span style="color:#b8e0f5">"</span></div>
<div class="a" style="left:700px;width:59px;text-align:right;top:633px;font-size:15px;line-height:18px;font-family:'Liberation Mono';letter-spacing:-0.2px;color:#5c5c5c">16</div>
<div class="a" style="left:785px;top:633px;font-size:15px;line-height:18px;font-family:'Liberation Mono';letter-spacing:-0.2px;white-space:pre"><span style="color:#d6d6d6">  </span><span style="color:#da70d6">}</span><span style="color:#b8e0f5">,</span></div>
<div class="a" style="left:700px;width:59px;text-align:right;top:665px;font-size:15px;line-height:18px;font-family:'Liberation Mono';letter-spacing:-0.2px;color:#5c5c5c">17</div>
<div class="a" style="left:785px;top:665px;font-size:15px;line-height:18px;font-family:'Liberation Mono';letter-spacing:-0.2px;white-space:pre"><span style="color:#d6d6d6">  </span><span style="color:#b8e0f5">"</span><span style="color:#d6d6d6">style</span><span style="color:#b8e0f5">"</span><span style="color:#b8e0f5">: </span><span style="color:#b8e0f5">"</span><span style="color:#f47355">v2</span><span style="color:#b8e0f5">"</span><span style="color:#b8e0f5">,</span></div>
<div class="a" style="left:700px;width:59px;text-align:right;top:697px;font-size:15px;line-height:18px;font-family:'Liberation Mono';letter-spacing:-0.2px;color:#5c5c5c">18</div>
<div class="a" style="left:785px;top:697px;font-size:15px;line-height:18px;font-family:'Liberation Mono';letter-spacing:-0.2px;white-space:pre"><span style="color:#d6d6d6">  </span><span style="color:#b8e0f5">"</span><span style="color:#d6d6d6">sitemapLocation</span><span style="color:#b8e0f5">"</span><span style="color:#b8e0f5">: </span><span style="color:#b8e0f5">"</span><span style="color:#f47355">sitemap.json</span><span style="color:#b8e0f5">"</span></div>
<div class="a" style="left:700px;width:59px;text-align:right;top:729px;font-size:15px;line-height:18px;font-family:'Liberation Mono';letter-spacing:-0.2px;color:#5c5c5c">19</div>
<div class="a" style="left:785px;top:729px;font-size:15px;line-height:18px;font-family:'Liberation Mono';letter-spacing:-0.2px;white-space:pre"><span style="color:#ffd700">}</span></div>

<!-- DEVTOOLS CONTENT -->
<div class="a" style="left:721px;top:758px;font-size:12px;line-height:16px;color:#f0f0f0">调试器</div>
<div class="r" style="left:721px;top:778px;width:33px;height:2px;background:#e8e8e8"></div>
<div class="r" style="left:762px;top:757px;width:18px;height:18px;border-radius:50%;background:#4a4a4a"></div>
<div class="a" style="left:762px;top:758px;width:18px;text-align:center;font-size:12px;line-height:16px;color:#eee">9</div>
<div class="a" style="left:800px;top:758px;font-size:12px;line-height:16px;color:#a8a8a8">问题</div>
<div class="a" style="left:842px;top:758px;font-size:12px;line-height:16px;color:#a8a8a8">输出</div>
<div class="a" style="left:884px;top:758px;font-size:12px;line-height:16px;color:#a8a8a8">终端</div>
<div class="a" style="left:926px;top:758px;font-size:12px;line-height:16px;color:#a8a8a8">代码质量</div>
<svg style="left:0;top:0" width="1866" height="1080">
 <g fill="none" stroke="#d8d8d8" stroke-width="1.2"><path d="M1801.5 769 L1807 763.5 L1812.5 769"/><path d="M1834 761.5 L1844 771.5 M1844 761.5 L1834 771.5"/></g>
 <g fill="none" stroke="#9a9a9a" stroke-width="1.1"><path d="M716 799.5 h-5.5 v-12 h12 v4"/></g>
 <path d="M716 790.5 l7.5 3 l-3 1.2 l3.5 3.5 l-1.2 1.2 l-3.5 -3.5 l-1.2 3z" fill="#9a9a9a"/>
</svg>
<div class="r" style="left:735px;top:785px;width:1px;height:16px;background:#444"></div>
<div class="r" style="left:742px;top:780px;width:54px;height:26px;background:#000"></div>
<div class="a" style="left:754px;top:787px;font-size:12px;line-height:15px;color:#fff">Wxml</div>
<div class="a" style="left:808px;top:787px;font-size:12px;line-height:15px;color:#dedede">Console</div>
<div class="a" style="left:873px;top:787px;font-size:12px;line-height:15px;color:#dedede">Sources</div>
<div class="a" style="left:938px;top:787px;font-size:12px;line-height:15px;color:#dedede">Network</div>
<div class="a" style="left:1007px;top:787px;font-size:12px;line-height:15px;color:#dedede">Performance</div>
<div class="a" style="left:1097px;top:787px;font-size:12px;line-height:15px;color:#dedede">Memory</div>
<div class="a" style="left:1165px;top:787px;font-size:12px;line-height:15px;color:#dedede">AppData</div>
<div class="a" style="left:1235px;top:787px;font-size:12px;line-height:15px;color:#dedede">Storage</div>
<div class="a" style="left:1299px;top:787px;font-size:12px;line-height:15px;color:#dedede">Security</div>
<div class="a" style="left:1374px;top:787px;font-size:12px;line-height:15px;color:#dedede">Sensor</div>
<div class="a" style="left:1433px;top:787px;font-size:12px;line-height:15px;color:#dedede">Mock</div>
<div class="a" style="left:1487px;top:787px;font-size:12px;line-height:15px;color:#dedede">Audits</div>
<div class="a" style="left:1543px;top:787px;font-size:12px;line-height:15px;color:#dedede">Vulnerability</div>

<svg style="left:0;top:0" width="1866" height="1080">
 <path d="M1749 786.5 L1755 797.5 H1743z" fill="#f5b800"/><rect x="1748.4" y="790" width="1.2" height="4" fill="#222"/><rect x="1748.4" y="795" width="1.2" height="1.2" fill="#222"/>
 <g fill="#a8a8a8"><circle cx="1821" cy="787" r="1.4"/><circle cx="1821" cy="793" r="1.4"/><circle cx="1821" cy="799" r="1.4"/></g>
 <g transform="translate(1793 793)" fill="#a8a8a8">
  <circle r="5.2"/><g><rect x="-1.6" y="-7.5" width="3.2" height="15"/><rect x="-1.6" y="-7.5" width="3.2" height="15" transform="rotate(45)"/><rect x="-1.6" y="-7.5" width="3.2" height="15" transform="rotate(90)"/><rect x="-1.6" y="-7.5" width="3.2" height="15" transform="rotate(135)"/></g>
  <circle r="2.2" fill="#292a2d"/>
 </g>
 <g fill="none" stroke="#8a8a8a" stroke-width="1.6"><rect x="1845.5" y="787.5" width="11" height="8"/><path d="M1842 791 v8.5 h11"/></g>
</svg>
<div class="a" style="left:1758px;top:787px;font-size:12px;line-height:15px;color:#dedede">9</div>
<div class="r" style="left:1775px;top:785px;width:1px;height:16px;background:#3e3e3e"></div>
<!-- wxml -->
<div class="a" style="left:715px;top:811px;font-family:'Liberation Mono';font-size:11px;line-height:17px;color:#5db3e6">&lt;page&gt;</div>
<div class="a" style="left:727px;top:828px;font-family:'Liberation Mono';font-size:11px;line-height:17px;color:#5db3e6;white-space:pre">&lt;wux-toptips <span style="color:#9bbcdd">id</span>="<span style="color:#f29766">wux-toptips</span>" <span style="color:#9bbcdd">is</span>="<span style="color:#f29766">utils/wux/toptips/index</span>"&gt;<span style="color:#ddd">…</span>&lt;/wux-toptips&gt;</div>
<div class="a" style="left:727px;top:845px;font-family:'Liberation Mono';font-size:11px;line-height:17px;color:#5db3e6;white-space:pre">&lt;view <span style="color:#9bbcdd">class</span>="<span style="color:#f29766">container</span>"&gt;<span style="color:#ddd">…</span>&lt;/view&gt;</div>
<div class="a" style="left:715px;top:862px;font-family:'Liberation Mono';font-size:11px;line-height:17px;color:#5db3e6">&lt;/page&gt;</div>
<svg style="left:0;top:0" width="1866" height="1080"><g fill="#a0a0a0"><path d="M718 830 l4 3.5 l-4 3.5z"/><path d="M718 847 l4 3.5 l-4 3.5z"/></g></svg>
<!-- styles pane -->
<div class="r" style="left:1540px;top:807px;width:1px;height:110px;background:#4a4a4a"></div>
<div class="r" style="left:1541px;top:807px;width:50px;height:26px;background:#000"></div>
<div class="r" style="left:1541px;top:833px;width:325px;height:1px;background:#3c3c3c"></div>
<div class="a" style="left:1550px;top:814px;font-size:12px;line-height:15px;color:#fff">Styles</div>
<div class="a" style="left:1600px;top:814px;font-size:12px;line-height:15px;color:#dedede">Computed</div>
<div class="a" style="left:1676px;top:814px;font-size:12px;line-height:15px;color:#dedede">Dataset</div>
<div class="a" style="left:1736px;top:814px;font-size:12px;line-height:15px;color:#dedede">Component Data</div>
<svg style="left:0;top:0" width="1866" height="1080"><g fill="none" stroke="#cfcfcf" stroke-width="1.1"><path d="M1846.5 815.5 l4 4 l-4 4 M1850.5 815.5 l4 4 l-4 4"/></g>
 <g fill="none" stroke="#6a6a6a" stroke-width="1.2"><path d="M1849 842 v10 M1844 847 h10"/></g><path d="M1858 852 v4 h-4z" fill="#666"/></svg>
<div class="r" style="left:1544px;top:837px;width:250px;height:20px;background:#1f1f1f"></div>
<div class="a" style="left:1548px;top:841px;font-size:12.5px;line-height:15px;color:#8a8a8a">Filter</div>
<div class="a" style="left:1803px;top:841px;font-family:'Liberation Mono';font-size:12px;line-height:15px;font-weight:bold;color:#f0f0f0;letter-spacing:-0.5px">.cls</div>
<div class="r" style="left:1541px;top:860px;width:325px;height:1px;background:#2e2e2e"></div>
<div class="r" style="left:701px;top:1029px;width:743px;height:1px;background:#4e4e4e"></div>
<div class="r" style="left:701px;top:1030px;width:743px;height:22px;background:#262626"></div>
<!-- white box -->

<div class="r" style="left:0;top:1052px;width:1866px;height:28px;background:#3a3a3a"></div>
<div class="r" style="left:500px;top:92px;width:1px;height:988px;background:#1f1f1f"></div>
<!-- STATUS CONTENT -->
<div class="a" style="left:8px;top:1058px;font-size:12px;line-height:16px;color:#b0b0b0">页面路径</div>
<div class="a" style="left:83px;top:1058px;font-size:12px;line-height:16px;color:#b0b0b0">pages/talents</div>
<div class="r" style="left:75px;top:1060px;width:1px;height:12px;background:#555"></div>
<svg style="left:0;top:0" width="1866" height="1080">
 <path d="M61.5 1065 h5.5 l-2.75 3z" fill="#aaa"/>
 <g fill="none" stroke="#a8a8a8" stroke-width="1.1"><rect x="165.5" y="1062.5" width="9" height="10"/><path d="M162.5 1070 v-9.5 h9.5"/>
  <circle cx="418.5" cy="1067.5" r="5.3"/><path d="M415.8 1062.8 Q416 1059.5 418.5 1059.5 Q421 1059.5 421.2 1062.8"/><path d="M418.5 1062.5 V1072.5"/><path d="M410.5 1062.5 l2.8 2.5 M426.5 1062.5 l-2.8 2.5 M410.5 1067.5 h2.7 M426.5 1067.5 h-2.7 M410.5 1072 l2.8 -2.3 M426.5 1072 l-2.8 -2.3"/>
  <path d="M444 1067 Q452 1059 460 1067 Q452 1075 444 1067Z"/><circle cx="452" cy="1067" r="2.6"/>
  <circle cx="522.5" cy="1066" r="6"/><path d="M520 1063.5 l5 5 M525 1063.5 l-5 5"/>
  <path d="M550 1060.5 L556.5 1072 H543.5z M550 1065 v4"/>
 </g>
 <g fill="#a8a8a8"><circle cx="479" cy="1067" r="1.1"/><circle cx="484" cy="1067" r="1.1"/><circle cx="489" cy="1067" r="1.1"/></g>
</svg>
<div class="a" style="left:533px;top:1058px;font-size:13px;line-height:16px;color:#b0b0b0">0</div>
<div class="a" style="left:560px;top:1058px;font-size:13px;line-height:16px;color:#b0b0b0">0</div>
<!-- STATUS -->

<div class="r" style="left:1444px;top:916px;width:422px;height:164px;background:#f6f7f9;border:3.5px solid #fff;border-bottom-width:1.5px"></div>
</body></html>
